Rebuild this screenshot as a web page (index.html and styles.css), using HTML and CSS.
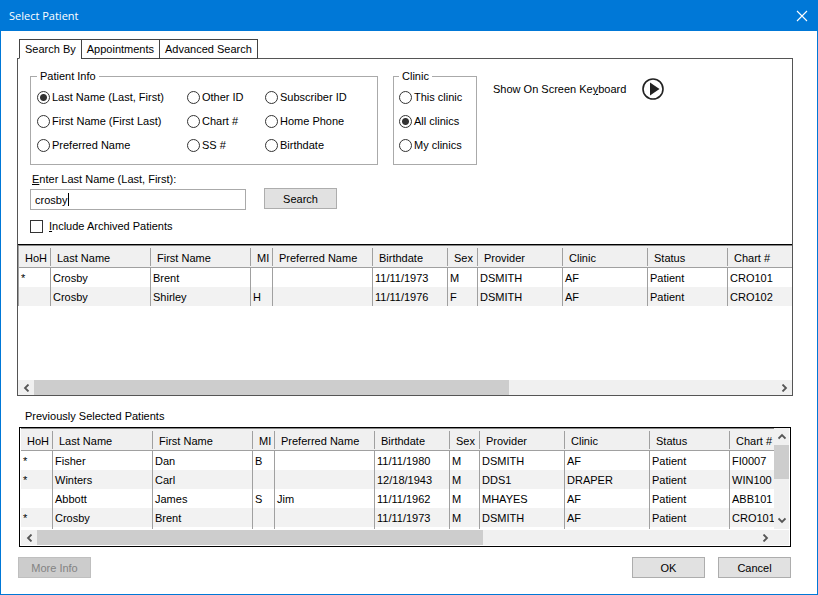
FILE: index.html
```
<!DOCTYPE html>
<html lang="en">

<head>
    <meta charset="utf-8">
    <title>Select Patient</title>
    <meta name="viewport" content="width=device-width, initial-scale=1">
    <link rel="stylesheet" href="styles.css">
</head>

<body>
    <div class="window">
        <header class="titlebar">
            <h1>Select Patient</h1>
            <button class="close" type="button" aria-label="Close">
                <svg width="12" height="12" viewBox="0 0 12 12"><path d="M1 1l10 10M11 1L1 11" stroke="#fff" stroke-width="1.1" fill="none"/></svg>
            </button>
        </header>

        <main class="content">
            <nav class="tabs">
                <button class="tab active" type="button">Search By</button>
                <button class="tab" type="button">Appointments</button>
                <button class="tab" type="button">Advanced Search</button>
            </nav>

            <section class="panel">
                <div class="options">
                    <fieldset class="group info">
                        <legend>Patient Info</legend>
                        <label><input type="radio" name="field" checked>Last Name (Last, First)</label>
                        <label><input type="radio" name="field">Other ID</label>
                        <label><input type="radio" name="field">Subscriber ID</label>
                        <label><input type="radio" name="field">First Name (First Last)</label>
                        <label><input type="radio" name="field">Chart #</label>
                        <label><input type="radio" name="field">Home Phone</label>
                        <label><input type="radio" name="field">Preferred Name</label>
                        <label><input type="radio" name="field">SS #</label>
                        <label><input type="radio" name="field">Birthdate</label>
                    </fieldset>
                    <fieldset class="group clinic">
                        <legend>Clinic</legend>
                        <label><input type="radio" name="clinic">This clinic</label>
                        <label><input type="radio" name="clinic" checked>All clinics</label>
                        <label><input type="radio" name="clinic">My clinics</label>
                    </fieldset>
                    <div class="keyboard">
                        <label for="osk">Show On Screen Ke<u>y</u>board</label>
                        <button id="osk" type="button">
                            <svg width="22" height="22" viewBox="0 0 22 22"><circle cx="11" cy="11" r="10" fill="none" stroke="#222" stroke-width="1.6"/><path d="M8 4.5v13L17.5 11z" fill="#222"/></svg>
                        </button>
                    </div>
                </div>

                <form class="search">
                    <label for="name"><u>E</u>nter Last Name (Last, First):</label>
                    <div class="search-row">
                        <div class="field">
                            <input id="name" type="text" value="crosby" autocomplete="off">
                            <span class="caret"></span>
                        </div>
                        <button class="btn" type="button">Search</button>
                    </div>
                    <label class="archived"><input type="checkbox"><span><u>I</u>nclude Archived Patients</span></label>
                </form>

                <div class="grid results">
                    <div class="rows">
                        <table>
                            <colgroup>
                                <col class="c-hoh"><col class="c-name"><col class="c-name"><col class="c-mi"><col class="c-name"><col class="c-birth"><col class="c-sex"><col class="c-prov"><col class="c-prov"><col class="c-status"><col>
                            </colgroup>
                            <thead>
                                <tr><th>HoH</th><th>Last Name</th><th>First Name</th><th>MI</th><th>Preferred Name</th><th>Birthdate</th><th>Sex</th><th>Provider</th><th>Clinic</th><th>Status</th><th>Chart #</th></tr>
                            </thead>
                            <tbody>
                                <tr><td>*</td><td>Crosby</td><td>Brent</td><td></td><td></td><td>11/11/1973</td><td>M</td><td>DSMITH</td><td>AF</td><td>Patient</td><td>CRO101</td></tr>
                                <tr><td></td><td>Crosby</td><td>Shirley</td><td>H</td><td></td><td>11/11/1976</td><td>F</td><td>DSMITH</td><td>AF</td><td>Patient</td><td>CRO102</td></tr>
                            </tbody>
                        </table>
                    </div>
                    <div class="hscroll">
                        <button type="button" aria-label="Scroll left"><svg width="7" height="8" viewBox="0 0 7 8"><path d="M5.5 .5L2 4l3.5 3.5" /></svg></button>
                        <div class="track"><div class="thumb"></div></div>
                        <button type="button" aria-label="Scroll right"><svg width="7" height="8" viewBox="0 0 7 8"><path d="M1.5 .5L5 4 1.5 7.5" /></svg></button>
                    </div>
                </div>
            </section>

            <h2>Previously Selected Patients</h2>

            <section class="grid previous">
                <div class="body">
                    <div class="rows">
                        <table>
                            <colgroup>
                                <col class="c-hoh"><col class="c-name"><col class="c-name"><col class="c-mi"><col class="c-name"><col class="c-birth"><col class="c-sex"><col class="c-prov"><col class="c-prov"><col class="c-status"><col>
                            </colgroup>
                            <thead>
                                <tr><th>HoH</th><th>Last Name</th><th>First Name</th><th>MI</th><th>Preferred Name</th><th>Birthdate</th><th>Sex</th><th>Provider</th><th>Clinic</th><th>Status</th><th>Chart #</th></tr>
                            </thead>
                            <tbody>
                                <tr><td>*</td><td>Fisher</td><td>Dan</td><td>B</td><td></td><td>11/11/1980</td><td>M</td><td>DSMITH</td><td>AF</td><td>Patient</td><td>FI0007</td></tr>
                                <tr><td>*</td><td>Winters</td><td>Carl</td><td></td><td></td><td>12/18/1943</td><td>M</td><td>DDS1</td><td>DRAPER</td><td>Patient</td><td>WIN100</td></tr>
                                <tr><td></td><td>Abbott</td><td>James</td><td>S</td><td>Jim</td><td>11/11/1962</td><td>M</td><td>MHAYES</td><td>AF</td><td>Patient</td><td>ABB101</td></tr>
                                <tr><td>*</td><td>Crosby</td><td>Brent</td><td></td><td></td><td>11/11/1973</td><td>M</td><td>DSMITH</td><td>AF</td><td>Patient</td><td>CRO101</td></tr>
                                <tr class="more"><td></td><td></td><td></td><td></td><td></td><td></td><td></td><td></td><td></td><td></td><td></td></tr>
                            </tbody>
                        </table>
                    </div>
                    <div class="vscroll">
                        <button type="button" aria-label="Scroll up"><svg width="8" height="7" viewBox="0 0 8 7"><path d="M.5 5.5L4 2l3.5 3.5" /></svg></button>
                        <div class="track"><div class="thumb"></div></div>
                        <button type="button" aria-label="Scroll down"><svg width="8" height="7" viewBox="0 0 8 7"><path d="M.5 1.5L4 5l3.5-3.5" /></svg></button>
                    </div>
                </div>
                <div class="hscroll">
                    <button type="button" aria-label="Scroll left"><svg width="7" height="8" viewBox="0 0 7 8"><path d="M5.5 .5L2 4l3.5 3.5" /></svg></button>
                    <div class="track"><div class="thumb"></div></div>
                    <button type="button" aria-label="Scroll right"><svg width="7" height="8" viewBox="0 0 7 8"><path d="M1.5 .5L5 4 1.5 7.5" /></svg></button>
                </div>
            </section>

            <footer class="actions">
                <button class="btn more-info" type="button" disabled>More Info</button>
                <button class="btn" type="button">OK</button>
                <button class="btn" type="button">Cancel</button>
            </footer>
        </main>
    </div>
</body>

</html>
```
FILE: styles.css
```
* {
    box-sizing: border-box;
}

body {
    margin: 0;
    background: #fff;
    color: #000;
    font: 11px/16px "Liberation Sans", Arial, sans-serif;
}

button,
input {
    font: inherit;
    color: inherit;
    margin: 0;
}

button {
    padding: 0;
    border: none;
    background: none;
}

.window {
    min-height: 100vh;
    display: flex;
    flex-direction: column;
    border: 1px solid #0078d7;
}

.titlebar {
    height: 30px;
    display: flex;
    align-items: center;
    justify-content: space-between;
    padding: 0 9px 0 8px;
    background: #0078d7;
    color: #fff;
}

.titlebar h1 {
    margin: 0;
    font: 11px/16px "Open Sans", "Noto Sans", sans-serif;
}

.close {
    display: flex;
}

.content {
    flex: 1;
    display: flex;
    flex-direction: column;
    padding: 8px 24px 16px 16px;
}

/* tabs */
.tabs {
    display: flex;
    padding-left: 2px;
    margin-bottom: -1px;
    z-index: 1;
}

.tab {
    height: 20px;
    padding: 0 5px;
    border: 1px solid #444;
    background: #fff;
    margin-left: -1px;
}

.tab:first-child {
    margin-left: 0;
}

.tab.active {
    border-bottom-color: #fff;
}

.panel {
    flex: 1;
    display: flex;
    flex-direction: column;
    border: 1px solid #555;
}

.options {
    display: flex;
    gap: 15px;
    padding: 9px 12px 0;
}

.group {
    margin: 0;
    padding: 5px 6px 11px;
    border: 1px solid #aaa;
    min-width: 0;
}

.group legend {
    padding: 0 3px;
}

.group label {
    display: flex;
    align-items: center;
    gap: 2px;
    white-space: nowrap;
}

.info {
    width: 348px;
    display: grid;
    grid-template-columns: 150px 78px 1fr;
    row-gap: 8px;
}

.clinic {
    width: 84px;
    display: grid;
    row-gap: 8px;
    padding-left: 5px;
}

input[type="radio"] {
    appearance: none;
    flex: none;
    width: 13px;
    height: 13px;
    border: 1px solid #333;
    border-radius: 50%;
    background: #fff;
}

input[type="radio"]:checked {
    background: radial-gradient(circle, #333 3px, #fff 4px);
}

.keyboard {
    display: flex;
    align-items: center;
    align-self: flex-start;
    gap: 16px;
    padding: 10px 0 0 1px;
}

.keyboard button {
    display: flex;
}

/* search form */
.search {
    padding: 6px 12px 10px;
}

.search > label {
    display: block;
    padding-left: 2px;
}

.search-row {
    display: flex;
    gap: 18px;
    padding: 1px 0 8px;
}

.field {
    position: relative;
    width: 216px;
    padding-top: 1px;
}

.field input {
    width: 100%;
    height: 21px;
    padding: 0 4px;
    border: 1px solid #aaa;
    outline: none;
}

.caret {
    position: absolute;
    left: 38px;
    top: 5px;
    width: 1px;
    height: 13px;
    background: #000;
}

.btn {
    width: 73px;
    height: 21px;
    border: 1px solid #adadad;
    background: #e1e1e1;
}

.btn:disabled {
    border-color: #bfbfbf;
    background: #ccc;
    color: #838383;
}

.search .archived {
    display: flex;
    align-items: center;
    gap: 6px;
    padding: 0;
}

input[type="checkbox"] {
    appearance: none;
    width: 13px;
    height: 13px;
    border: 1px solid #333;
    background: #fff;
}

/* patient grids */
.grid {
    display: flex;
    flex-direction: column;
}

.results {
    flex: 1;
    border-top: 1px solid #000;
}

.rows {
    flex: 1;
    min-width: 0;
    overflow: hidden;
    border-top: 1px solid #888;
}

.results table {
    border-left: 1px solid #a0a0a0;
}

table {
    width: 100%;
    table-layout: fixed;
    border-collapse: separate;
    border-spacing: 0;
}

.c-hoh { width: 32px; }
.c-name { width: 100px; }
.c-mi { width: 22px; }
.c-birth { width: 75px; }
.c-sex { width: 30px; }
.c-prov { width: 85px; }
.c-status { width: 80px; }

th,
td {
    white-space: nowrap;
    text-align: left;
    font-weight: normal;
}

th {
    height: 22px;
    padding: 2px 0 0 6px;
    border-bottom: 1px solid #a0a0a0;
    background: linear-gradient(#a0a0a0, #a0a0a0) right 2px / 1px 18px no-repeat #f0f0f0;
}

th:last-child {
    background: #f0f0f0;
}

td {
    height: 19px;
    padding: 0 0 0 2px;
    border-right: 1px solid #a0a0a0;
}

td:last-child {
    border-right: none;
}

tbody tr:nth-child(even) {
    background: #f2f2f2;
}

h2 {
    margin: 12px 0 3px 8px;
    font: inherit;
}

.previous {
    margin: 0 2px;
    border: 1px solid #000;
    padding: 0 1px 1px;
}

.previous .body {
    display: flex;
}

/* top edge of a row scrolled out of view */
.more td {
    height: 2px;
}

/* scroll bars */
.hscroll,
.vscroll {
    display: flex;
    background: #f0f0f0;
}

.hscroll {
    height: 15px;
}

.previous .hscroll {
    margin-top: 1px;
    padding-right: 16px;
}

.vscroll {
    flex-direction: column;
    width: 15px;
}

.hscroll button,
.vscroll button {
    flex: none;
    display: flex;
    align-items: center;
    justify-content: center;
    width: 16px;
    height: 15px;
}

.vscroll button {
    width: 15px;
    height: 17px;
}

.hscroll path,
.vscroll path {
    fill: none;
    stroke: #555;
    stroke-width: 1.8;
}

.track {
    flex: 1;
}

.thumb {
    background: #cdcdcd;
}

.hscroll .thumb {
    width: 64%;
    height: 100%;
}

.previous .hscroll .thumb {
    width: 62%;
}

.vscroll .thumb {
    height: 50%;
}

.actions {
    display: flex;
    gap: 13px;
    padding: 10px 2px 0 1px;
}

.more-info {
    margin-right: auto;
}
```
